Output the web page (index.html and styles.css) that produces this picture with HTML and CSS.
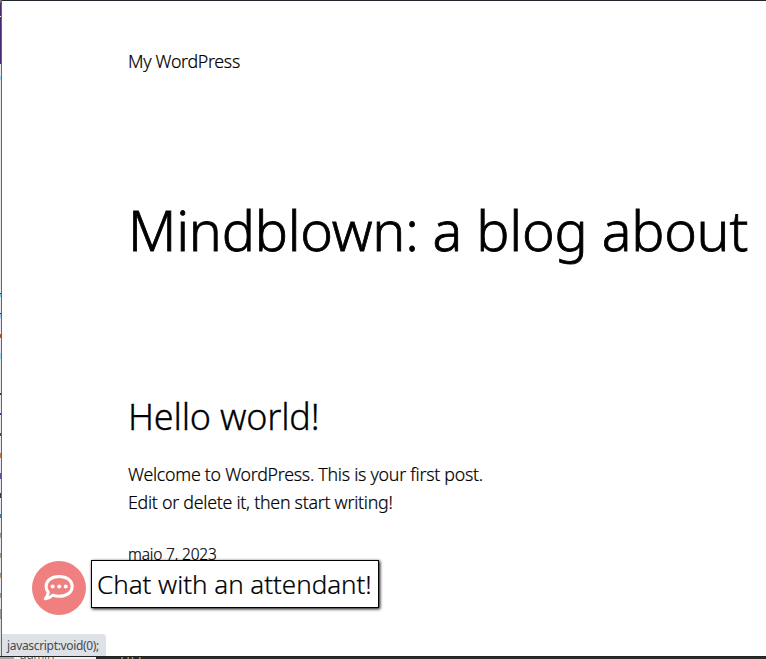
FILE: index.html
```html
<!DOCTYPE html>
<html lang="en">
<head>
<meta charset="utf-8">
<title>My WordPress</title>
<link rel="stylesheet" href="styles.css">
</head>
<body>
<div class="desktop">
  <div class="edge"></div>
  <div class="window">
    <header class="site-title"><span>My WordPress</span></header>
    <h1><span>Mindblown: a blog about</span></h1>
    <article>
      <h2><span>Hello world!</span></h2>
      <p><span class="line-a">Welcome to WordPress. This is your first post.</span><br><span class="line-b">Edit or delete it, then start writing!</span></p>
      <time><span>maio 7, 2023</span></time>
    </article>
  </div>
  <div class="behind">
    <div class="behind-panel"><span>admin</span></div>
    <div class="behind-dark"><span>TfG</span></div>
  </div>
</div>
<div class="chat">
  <div class="chat-button">
    <svg width="32" height="28" viewBox="0 0 32 28" fill="none">
      <path d="M16.2 2.4C24 2.4 29.2 6.7 29.2 12.4S24 22.3 16.2 22.3C13.900 22.3 11.900 22 10 21.200C8 22.900 5.200 24.400 2.300 24.800C4.200 22.800 5 20.600 5.300 18.200C3.900 16.600 3.100 14.600 3.100 12.400C3.100 6.700 8.400 2.400 16.200 2.400Z" stroke="#fff" stroke-width="3" stroke-linejoin="round"/>
      <circle cx="9.700" cy="12.400" r="2" fill="#fff"/><circle cx="16.200" cy="12.400" r="2" fill="#fff"/><circle cx="22.700" cy="12.400" r="2" fill="#fff"/>
    </svg>
  </div>
  <div class="chat-label"><span>Chat with an attendant!</span></div>
</div>
<div class="status"><span>javascript:void(0);</span></div>
</body>
</html>
```

FILE: styles.css
```css
* { box-sizing: border-box; }
body {
  margin: 0;
  width: 766px;
  height: 659px;
  overflow: hidden;
  background: #fff;
  color: #000;
  font-family: "Noto Sans", "Open Sans", sans-serif;
  font-weight: 300;
}
span { white-space: nowrap; }
.desktop {
  display: grid;
  grid-template-columns: 2px 1fr;
  grid-template-rows: 656px 3px;
}
.edge {
  border-right: 1px solid #65656a;
  background: linear-gradient(#777 0 3px, #472a74 3px 16px, #eee 16px 17px, #472a74 17px 64px, #e8e8ec 64px 76px, #9ed8f5 76px 80px, #e8e8ec 80px 293px, #345 293px 294px, #76c8ee 294px 297px, #e8e8ec 297px 313px, #234 313px 314px, #8cf 314px 318px, #e8e8ec 318px 334px, #a65b28 334px 338px, #e8e8ec 338px 353px, #9ed8f5 353px 359px, #e8e8ec 359px 393px, #333 393px 395px, #e8e8ec 395px 413px, #33a 413px 415px, #e8e8ec 415px 433px, #543 433px 436px, #e8e8ec 436px 453px, #c87838 453px 458px, #e8e8ec 458px 473px, #5555a0 473px 479px, #e8e8ec 479px 493px, #246 493px 498px, #e8e8ec 498px 514px, #47a 514px 518px, #e8e8ec 518px 533px, #69b 533px 534px, #c96 536px 538px, #e8e8ec 538px 553px, #69b 553px 554px, #c96 556px 558px, #e8e8ec 558px 573px, #69b 573px 574px, #c96 576px 578px, #e8e8ec 578px 593px, #69b 593px 594px, #c96 596px 598px, #e8e8ec 598px 609px, #999 609px 619px, #ddd 619px);
}
.window {
  border-top: 1px solid #22252b;
  padding-left: 126px;
  overflow: hidden;
  background: #fff;
}
.site-title { height: 28px; margin-top: 46px; font-size: 17.800px; line-height: 28px; letter-spacing: -0.300px; -webkit-text-stroke: 0.200px #000; }
h1 { height: 66px; margin: 122px 0 0; font-size: 55.500px; font-weight: 300; line-height: 66px; letter-spacing: -0.250px; -webkit-text-stroke: 0.800px #000; }
article { margin-top: 132px; }
h2 { height: 44px; margin: 0; font-size: 36px; font-weight: 300; line-height: 44px; letter-spacing: -0.230px; -webkit-text-stroke: 0.300px #000; }
p { margin: 21px 0 0; font-size: 17.800px; line-height: 28px; letter-spacing: -0.260px; -webkit-text-stroke: 0.200px #000; }
time { display: block; margin-top: 26px; font-size: 15.500px; line-height: 24px; letter-spacing: -0.170px; -webkit-text-stroke: 0.200px #000; }
.behind {
  grid-column: 1 / 3;
  display: flex;
  overflow: hidden;
  border-top: 1px solid #222;
  background: #aaa;
  font-size: 12px;
  line-height: 16px;
}
.behind-panel { width: 82px; margin-left: 14px; padding-left: 6px; background: #f1f1f1; color: #222; }
.behind-panel span, .behind-dark span { display: block; margin-top: -10px; }
.behind-dark { flex: 1; padding-left: 22px; background: #2b2a28; color: #ccc; font-size: 15px; }
.chat { position: absolute; left: 32px; top: 560px; display: flex; gap: 5px; }
.chat-button {
  display: flex;
  align-items: center;
  justify-content: center;
  width: 54px;
  height: 54px;
  margin-top: 1px;
  border-radius: 50%;
  background: #f08080;
}
.chat-label {
  width: 288px;
  height: 48px;
  padding-left: 5px;
  border: 1px solid #000;
  background: #fff;
  box-shadow: 1px 1px 3px #000;
  font-size: 26px;
  line-height: 47px;
  letter-spacing: -0.030px;
  -webkit-text-stroke: 0.200px #000;
}
.status {
  position: absolute;
  left: 2px;
  top: 634px;
  width: 104px;
  height: 22px;
  padding-left: 5px;
  border-top-right-radius: 4px;
  background: #dee1e6;
  color: #46494d;
  font-size: 12px;
  font-weight: 400;
  line-height: 23px;
  letter-spacing: -0.330px;
}
```
